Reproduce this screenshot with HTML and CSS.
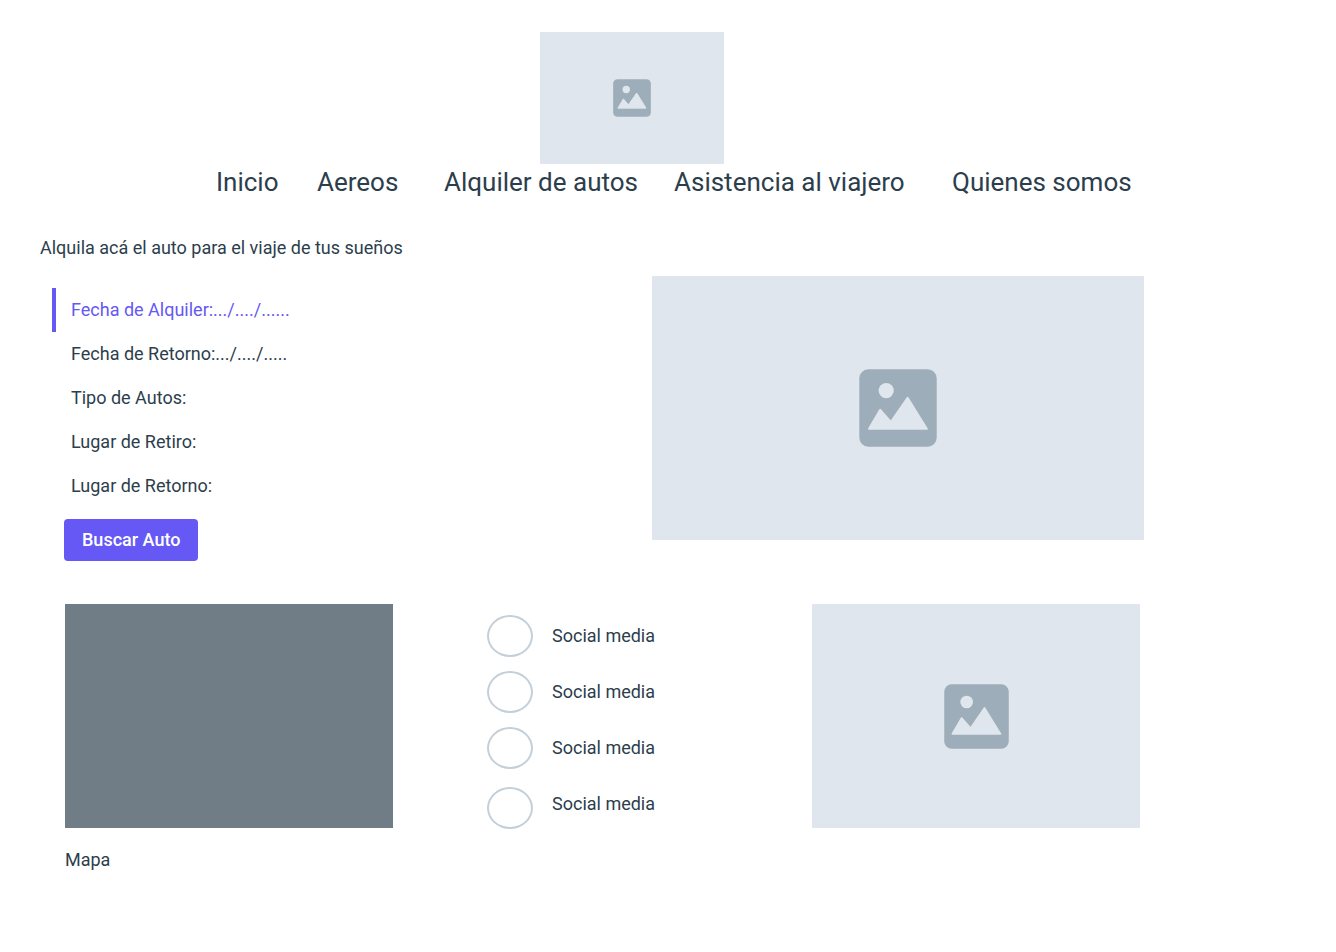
FILE: index.html
```html
<!DOCTYPE html>
<html lang="es">
<head>
<meta charset="utf-8">
<meta name="viewport" content="width=device-width, initial-scale=1">
<title>Alquiler de autos</title>
<link rel="stylesheet" href="styles.css">
</head>
<body>
<svg class="sprite" aria-hidden="true">
  <symbol id="picture" viewBox="0 0 78 78">
    <rect class="picture-frame" x="0.3" y="0.3" width="77.4" height="77.4" rx="9"/>
    <circle class="picture-shape" cx="27.2" cy="21.6" r="7.6"/>
    <path class="picture-shape picture-hills" d="M10 59.8 21.2 40.8 31.8 53 48.6 28.8 67.8 59.8Z"/>
  </symbol>
</svg>
<div class="page">
  <header class="header">
    <div class="placeholder logo" role="img" aria-label="Logo"><svg class="icon-small"><use href="#picture"/></svg></div>
    <nav class="nav">
      <a href="#">Inicio</a>
      <a href="#">Aereos</a>
      <a href="#">Alquiler de autos</a>
      <a href="#">Asistencia al viajero</a>
      <a href="#">Quienes somos</a>
    </nav>
  </header>
  <main>
    <h1 class="title">Alquila acá el auto para el viaje de tus sueños</h1>
    <section class="search">
      <div class="options">
        <ul class="option-list">
          <li><a class="option active" href="#">Fecha de Alquiler:.../..../......</a></li>
          <li><a class="option" href="#">Fecha de Retorno:.../..../.....</a></li>
          <li><a class="option" href="#">Tipo de Autos:</a></li>
          <li><a class="option" href="#">Lugar de Retiro:</a></li>
          <li><a class="option" href="#">Lugar de Retorno:</a></li>
        </ul>
        <button class="submit" type="button">Buscar Auto</button>
      </div>
      <div class="placeholder hero" role="img" aria-label="Auto"><svg class="icon-large"><use href="#picture"/></svg></div>
    </section>
  </main>
  <footer class="footer">
    <figure class="map">
      <div class="map-area"></div>
      <figcaption>Mapa</figcaption>
    </figure>
    <ul class="social">
      <li><a href="#"><span class="ring"></span><span>Social media</span></a></li>
      <li><a href="#"><span class="ring"></span><span>Social media</span></a></li>
      <li><a href="#"><span class="ring"></span><span>Social media</span></a></li>
      <li><a class="tall" href="#"><span class="ring"></span><span>Social media</span></a></li>
    </ul>
    <div class="placeholder promo" role="img" aria-label="Imagen"><svg class="icon-medium"><use href="#picture"/></svg></div>
  </footer>
</div>
</body>
</html>
```
FILE: styles.css
```css
* {
  box-sizing: border-box;
}

body {
  margin: 0;
  background: #fff;
  color: #2c3e4c;
  font: 18px/24px Roboto, sans-serif;
}

a {
  color: inherit;
  text-decoration: none;
}

ul {
  list-style: none;
  margin: 0;
  padding: 0;
}

.sprite {
  display: none;
}

.picture-frame {
  fill: #9eadba;
}

.picture-shape {
  fill: #dfe6ed;
}

.picture-hills {
  stroke: #dfe6ed;
  stroke-width: 2;
  stroke-linejoin: round;
}

.page {
  padding: 32px 192px 32px 40px;
}

.placeholder {
  display: grid;
  place-items: center;
  background: #dfe6ed;
}

.icon-small {
  width: 38px;
  height: 38px;
}

.icon-medium {
  width: 65px;
  height: 65px;
}

.icon-large {
  width: 78px;
  height: 78px;
}

.header {
  display: flex;
  flex-direction: column;
  padding-left: 80px;
}

.logo {
  width: 184px;
  height: 132px;
  align-self: center;
}

.nav {
  display: grid;
  grid-template-columns: 101fr 127fr 230fr 278fr 192fr;
  padding-left: 96px;
  font-size: 26px;
  line-height: 36px;
  white-space: nowrap;
}

.title {
  margin: 36px 0 16px;
  font-size: 18px;
  font-weight: 400;
  line-height: 24px;
}

.search {
  display: grid;
  grid-template-columns: 612fr 492fr;
  align-items: start;
}

.options {
  padding: 12px 12px 0;
}

.option {
  display: block;
  padding: 10px 15px;
  border-left: 4px solid transparent;
}

.active {
  border-color: #6558f5;
  color: #6558f5;
}

.submit {
  height: 42px;
  margin: 11px 12px 0;
  padding: 0 18px;
  border: 0;
  border-radius: 4px;
  background: #6558f5;
  color: #fff;
  font: 500 18px/24px Roboto, sans-serif;
}

.hero {
  aspect-ratio: 492 / 264;
}

.footer {
  display: grid;
  grid-template-columns: 328fr 231fr 328fr;
  gap: 94px;
  align-items: start;
  margin-top: 43px;
  padding: 0 4px 0 25px;
}

.map {
  margin: 0;
}

.map-area {
  aspect-ratio: 328 / 224;
  margin-bottom: 20px;
  background: #707d86;
}

.social {
  display: grid;
  gap: 14px;
  padding-top: 11px;
}

.social a {
  display: flex;
  gap: 19px;
  line-height: 42px;
}

.social .tall {
  min-height: 50px;
}

.ring {
  width: 46px;
  height: 42px;
  align-self: center;
  border: 2px solid #c3cfd9;
  border-radius: 50%;
}

.promo {
  aspect-ratio: 328 / 224;
}
```
